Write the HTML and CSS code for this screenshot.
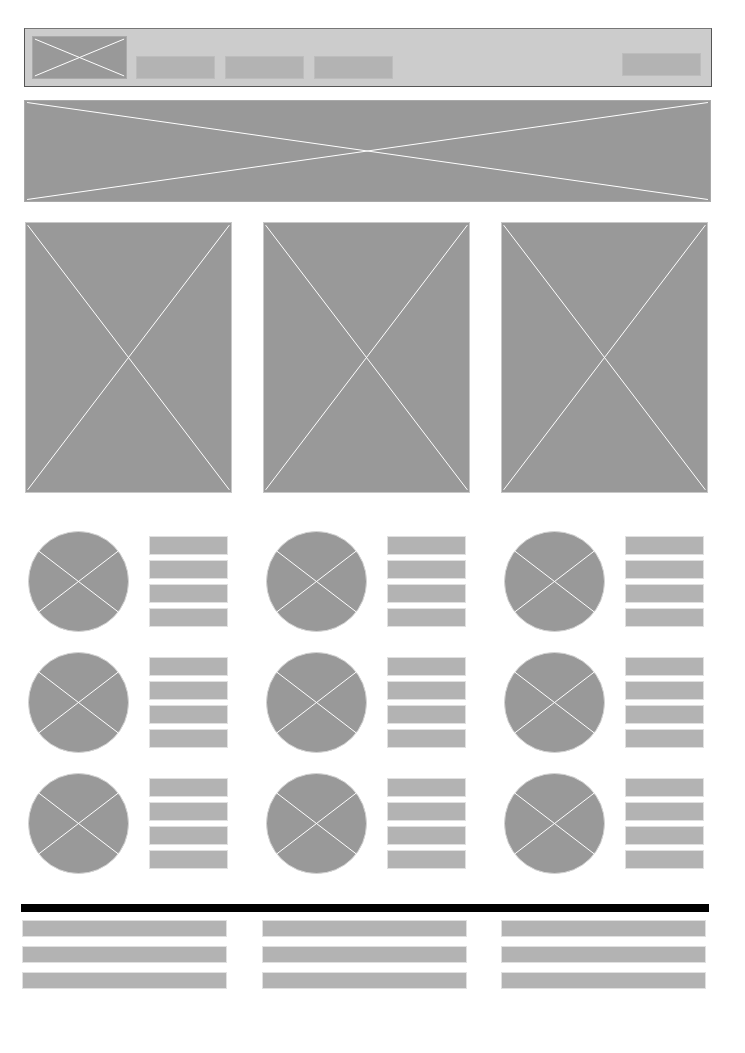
FILE: index.html
```html
<!DOCTYPE html>
<html lang="en">
<head>
  <meta charset="UTF-8" />
  <meta name="viewport" content="width=device-width, initial-scale=1.0"/>
  <title>Wireframe</title>
  <link rel="stylesheet" href="styles.css">
</head>
<body>
  <div class="page">
    <header class="topbar">
      <svg class="ph logo" viewBox="0 0 100 100" preserveAspectRatio="none">
        <line x1="2" y1="5" x2="98" y2="95"/><line x1="98" y1="5" x2="2" y2="95"/>
      </svg>
      <nav class="nav">
        <span class="nav-item"></span>
        <span class="nav-item"></span>
        <span class="nav-item"></span>
      </nav>
      <span class="nav-button"></span>
    </header>

    <svg class="ph banner" viewBox="0 0 100 100" preserveAspectRatio="none">
      <line x1="0.3" y1="1.5" x2="99.7" y2="98.5"/><line x1="99.7" y1="1.5" x2="0.3" y2="98.5"/>
    </svg>

    <section class="cards">
      <svg class="ph card" viewBox="0 0 100 100" preserveAspectRatio="none">
        <line x1="0.8" y1="0.8" x2="99.2" y2="99.2"/><line x1="99.2" y1="0.8" x2="0.8" y2="99.2"/>
      </svg>
      <svg class="ph card" viewBox="0 0 100 100" preserveAspectRatio="none">
        <line x1="0.8" y1="0.8" x2="99.2" y2="99.2"/><line x1="99.2" y1="0.8" x2="0.8" y2="99.2"/>
      </svg>
      <svg class="ph card" viewBox="0 0 100 100" preserveAspectRatio="none">
        <line x1="0.8" y1="0.8" x2="99.2" y2="99.2"/><line x1="99.2" y1="0.8" x2="0.8" y2="99.2"/>
      </svg>
    </section>

    <section class="features">
      <div class="feature">
        <svg class="avatar" viewBox="0 0 100 100"><circle cx="50" cy="50" r="49.5"/><line x1="10.3" y1="19.6" x2="89.7" y2="80.4"/><line x1="89.7" y1="19.6" x2="10.3" y2="80.4"/></svg>
        <div class="lines"><span class="line"></span><span class="line"></span><span class="line"></span><span class="line"></span></div>
      </div>
      <div class="feature">
        <svg class="avatar" viewBox="0 0 100 100"><circle cx="50" cy="50" r="49.5"/><line x1="10.3" y1="19.6" x2="89.7" y2="80.4"/><line x1="89.7" y1="19.6" x2="10.3" y2="80.4"/></svg>
        <div class="lines"><span class="line"></span><span class="line"></span><span class="line"></span><span class="line"></span></div>
      </div>
      <div class="feature">
        <svg class="avatar" viewBox="0 0 100 100"><circle cx="50" cy="50" r="49.5"/><line x1="10.3" y1="19.6" x2="89.7" y2="80.4"/><line x1="89.7" y1="19.6" x2="10.3" y2="80.4"/></svg>
        <div class="lines"><span class="line"></span><span class="line"></span><span class="line"></span><span class="line"></span></div>
      </div>
      <div class="feature">
        <svg class="avatar" viewBox="0 0 100 100"><circle cx="50" cy="50" r="49.5"/><line x1="10.3" y1="19.6" x2="89.7" y2="80.4"/><line x1="89.7" y1="19.6" x2="10.3" y2="80.4"/></svg>
        <div class="lines"><span class="line"></span><span class="line"></span><span class="line"></span><span class="line"></span></div>
      </div>
      <div class="feature">
        <svg class="avatar" viewBox="0 0 100 100"><circle cx="50" cy="50" r="49.5"/><line x1="10.3" y1="19.6" x2="89.7" y2="80.4"/><line x1="89.7" y1="19.6" x2="10.3" y2="80.4"/></svg>
        <div class="lines"><span class="line"></span><span class="line"></span><span class="line"></span><span class="line"></span></div>
      </div>
      <div class="feature">
        <svg class="avatar" viewBox="0 0 100 100"><circle cx="50" cy="50" r="49.5"/><line x1="10.3" y1="19.6" x2="89.7" y2="80.4"/><line x1="89.7" y1="19.6" x2="10.3" y2="80.4"/></svg>
        <div class="lines"><span class="line"></span><span class="line"></span><span class="line"></span><span class="line"></span></div>
      </div>
      <div class="feature">
        <svg class="avatar" viewBox="0 0 100 100"><circle cx="50" cy="50" r="49.5"/><line x1="10.3" y1="19.6" x2="89.7" y2="80.4"/><line x1="89.7" y1="19.6" x2="10.3" y2="80.4"/></svg>
        <div class="lines"><span class="line"></span><span class="line"></span><span class="line"></span><span class="line"></span></div>
      </div>
      <div class="feature">
        <svg class="avatar" viewBox="0 0 100 100"><circle cx="50" cy="50" r="49.5"/><line x1="10.3" y1="19.6" x2="89.7" y2="80.4"/><line x1="89.7" y1="19.6" x2="10.3" y2="80.4"/></svg>
        <div class="lines"><span class="line"></span><span class="line"></span><span class="line"></span><span class="line"></span></div>
      </div>
      <div class="feature">
        <svg class="avatar" viewBox="0 0 100 100"><circle cx="50" cy="50" r="49.5"/><line x1="10.3" y1="19.6" x2="89.7" y2="80.4"/><line x1="89.7" y1="19.6" x2="10.3" y2="80.4"/></svg>
        <div class="lines"><span class="line"></span><span class="line"></span><span class="line"></span><span class="line"></span></div>
      </div>
    </section>

    <footer class="footer">
      <div class="footer-rule"></div>
      <div class="footer-cols">
        <div class="footer-col"><span class="fline"></span><span class="fline"></span><span class="fline"></span></div>
        <div class="footer-col"><span class="fline"></span><span class="fline"></span><span class="fline"></span></div>
        <div class="footer-col"><span class="fline"></span><span class="fline"></span><span class="fline"></span></div>
      </div>
    </footer>
  </div>
</body>
</html>
```

FILE: styles.css
```css
body {
  margin: 0;
  background: #fff;
  font-family: "Liberation Sans", Arial, sans-serif;
}
.page {
  width: 745px;
  padding-top: 28px;
}
.ph {
  display: block;
  background: #999;
  box-sizing: border-box;
}
.ph line,
.avatar line {
  stroke: #fff;
  stroke-width: 1;
  vector-effect: non-scaling-stroke;
}

/* top bar */
.topbar {
  display: flex;
  align-items: flex-end;
  box-sizing: border-box;
  margin-left: 24px;
  width: 688px;
  height: 59px;
  padding: 7px 10px 7px 7px;
  background: #ccc;
  border: 1px solid #555;
  border-top-color: #777;
}
.logo {
  width: 95px;
  height: 43px;
  border: 1px solid #aaa;
}
.nav {
  display: flex;
  gap: 10px;
  margin-left: 9px;
}
.nav-item,
.nav-button {
  display: block;
  width: 79px;
  height: 23px;
  box-sizing: border-box;
  background: #b3b3b3;
  border: 1px solid #bdbdbd;
}
.nav-button {
  margin-left: auto;
  margin-bottom: 3px;
}

/* banner */
.banner {
  margin: 13px 0 0 24px;
  width: 687px;
  height: 102px;
  border: 1px solid #aaa;
}

/* big cards */
.cards {
  display: grid;
  grid-template-columns: repeat(3, 207px);
  justify-content: space-between;
  margin: 20px 0 0 25px;
  width: 683px;
}
.card {
  width: 207px;
  height: 271px;
  border: 1px solid #c8c8c8;
}

/* circle + lines rows */
.features {
  display: grid;
  grid-template-columns: repeat(3, 207px);
  justify-content: space-between;
  row-gap: 20px;
  margin: 38px 0 0 25px;
  width: 683px;
}
.feature {
  display: flex;
  align-items: center;
  gap: 20px;
  padding-left: 3px;
}
.avatar {
  width: 101px;
  height: 101px;
  flex: none;
}
.avatar circle {
  fill: #999;
  stroke: #d4d4d4;
  stroke-width: 1;
  vector-effect: non-scaling-stroke;
}
.lines {
  display: flex;
  flex-direction: column;
  gap: 5px;
}
.line {
  display: block;
  width: 79px;
  height: 19px;
  box-sizing: border-box;
  background: #b3b3b3;
  border: 1px solid #e0e0e0;
}

/* footer */
.footer {
  margin-top: 30px;
}
.footer-rule {
  margin-left: 21px;
  width: 688px;
  height: 8px;
  background: #000;
}
.footer-cols {
  display: grid;
  grid-template-columns: repeat(3, 205px);
  justify-content: space-between;
  margin: 8px 0 0 22px;
  width: 684px;
}
.footer-col {
  display: flex;
  flex-direction: column;
  gap: 9px;
}
.fline {
  display: block;
  height: 17px;
  box-sizing: border-box;
  background: #b3b3b3;
  border: 1px solid #e0e0e0;
}
```
